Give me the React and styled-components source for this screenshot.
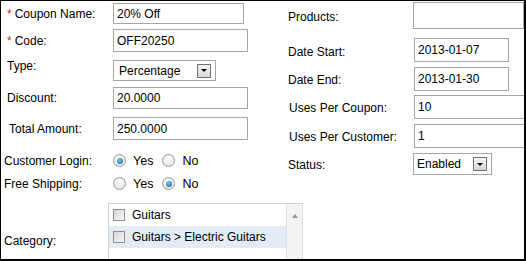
import { createGlobalStyle } from "styled-components";
import styled from "styled-components";

const Global = createGlobalStyle`
  html, body { margin: 0; padding: 0; background: #fff; }
  body { font-family: "Liberation Sans", Arial, sans-serif; font-size: 12px; color: #000; }
`;

const Frame = styled.div`
  width: 526px;
  height: 261px;
  box-sizing: border-box;
  border-style: solid;
  border-color: #000;
  border-width: 1px 2px 2px 1px;
  overflow: hidden;
  display: flex;
`;

const Column = styled.div`
  width: ${(p) => p.$w}px;
  padding-left: ${(p) => p.$pl}px;
  box-sizing: border-box;
  display: flex;
  flex-direction: column;
  flex-shrink: 0;
`;

const Row = styled.div`
  display: flex;
  align-items: center;
  margin-top: ${(p) => p.$mt}px;
  height: ${(p) => p.$h}px;
  flex-shrink: 0;
`;

// margin inside a centred flex row moves the label by half its value
const Label = styled.div`
  width: ${(p) => p.$w || 109}px;
  padding-left: ${(p) => p.$pl || 0}px;
  margin-top: ${(p) => p.$dy || 0}px;
  box-sizing: border-box;
  flex-shrink: 0;
  white-space: nowrap;
`;

const Star = styled.span`
  color: #e0241b;
  margin-right: 3px;
`;

const Input = styled.div`
  width: ${(p) => p.$w}px;
  height: 100%;
  box-sizing: border-box;
  border: 1px solid #a5a5a5;
  padding-left: ${(p) => p.$pl || 3}px;
  display: flex;
  align-items: center;
  flex-shrink: 0;
  white-space: nowrap;
`;

const Select = styled(Input)`
  justify-content: space-between;
  padding-right: 4px;
`;

const Arrow = styled.span`
  width: 14px;
  height: 14px;
  box-sizing: border-box;
  border: 1px solid #707070;
  background: linear-gradient(#f4f4f4, #d8d8d8);
  display: flex;
  align-items: center;
  justify-content: center;
  &::after {
    content: "";
    border-left: 3px solid transparent;
    border-right: 3px solid transparent;
    border-top: 3px solid #000;
  }
`;

const Options = styled.div`
  display: flex;
  align-items: center;
  padding-left: 0;
`;

const Radio = styled.span`
  width: 13px;
  height: 13px;
  box-sizing: border-box;
  border-radius: 50%;
  border: 1px solid #9a9a9a;
  background: radial-gradient(circle at 50% 35%, #ffffff, #dcdcdc);
  display: inline-flex;
  align-items: center;
  justify-content: center;
  margin-right: 7px;
  &::after {
    content: "";
    display: ${(p) => (p.$checked ? "block" : "none")};
    width: 6px;
    height: 6px;
    border-radius: 50%;
    background: radial-gradient(circle at 40% 35%, #7cc7f0, #0f5d93);
  }
`;

const OptText = styled.span`
  margin-right: 9px;
  font-size: 12.5px;
`;

const ListBox = styled.div`
  width: 195px;
  height: 76px;
  box-sizing: border-box;
  border: 1px solid #cfcfcf;
  border-right: none;
  display: flex;
  flex-shrink: 0;
  align-self: flex-start;
`;

const ListItems = styled.div`
  flex: 1;
`;

const Item = styled.div`
  height: 22px;
  display: flex;
  align-items: center;
  padding-left: 4px;
  background: ${(p) => (p.$hl ? "#e3ecf6" : "transparent")};
  white-space: nowrap;
  overflow: hidden;
`;

const Check = styled.span`
  width: 12px;
  height: 12px;
  box-sizing: border-box;
  border: 1px solid #8e8e8e;
  background: linear-gradient(135deg, #d6d6d6, #f7f7f7);
  margin-right: 7px;
  flex-shrink: 0;
`;

const Scroll = styled.div`
  width: 17px;
  background: #f3f3f3;
  border-left: 1px solid #e2e2e2;
  border-right: 1px solid #dedede;
  display: flex;
  flex-direction: column;
  align-items: center;
  justify-content: space-between;
  padding: 6px 0;
  box-sizing: border-box;
`;

const ScrollArrow = styled.span`
  border-left: 3px solid transparent;
  border-right: 3px solid transparent;
  ${(p) => (p.$down ? "border-top: 3px solid #b5b5b5;" : "border-bottom: 4px solid #9a9a9a;")}
  margin-top: ${(p) => (p.$down ? 0 : 4)}px;
`;

export default function App() {
  return (
    <>
      <Global />
      <Frame>
        <Column $w={282} $pl={3}>
          <Row $mt={2} $h={21}>
            <Label $pl={3}><Star>*</Star>Coupon Name:</Label>
            <Input $w={131}>20% Off</Input>
          </Row>
          <Row $mt={5} $h={23}>
            <Label $pl={3}><Star>*</Star>Code:</Label>
            <Input $w={135}>OFF20250</Input>
          </Row>
          <Row $mt={8} $h={21}>
            <Label $pl={3} $dy={-9}>Type:</Label>
            <Select $w={103} $pl={5}>
              Percentage
              <Arrow />
            </Select>
          </Row>
          <Row $mt={6} $h={22}>
            <Label $pl={3}>Discount:</Label>
            <Input $w={135}>20.0000</Input>
          </Row>
          <Row $mt={8} $h={23}>
            <Label $pl={5}>Total Amount:</Label>
            <Input $w={135}>250.0000</Input>
          </Row>
          <Row $mt={12} $h={17}>
            <Label>Customer Login:</Label>
            <Options>
              <Radio $checked />
              <OptText>Yes</OptText>
              <Radio />
              <OptText>No</OptText>
            </Options>
          </Row>
          <Row $mt={6} $h={17}>
            <Label>Free Shipping:</Label>
            <Options>
              <Radio />
              <OptText>Yes</OptText>
              <Radio $checked />
              <OptText>No</OptText>
            </Options>
          </Row>
          <Row $mt={11} $h={76}>
            <Label $w={104}>Category:</Label>
            <ListBox>
              <ListItems>
                <Item><Check />Guitars</Item>
                <Item $hl><Check />Guitars &gt; Electric Guitars</Item>
              </ListItems>
              <Scroll>
                <ScrollArrow />
                <ScrollArrow $down />
              </Scroll>
            </ListBox>
          </Row>
        </Column>
        <Column $w={241} $pl={5}>
          <Row $mt={1} $h={27}>
            <Label $w={125} $dy={3}>Products:</Label>
            <Input $w={111} />
          </Row>
          <Row $mt={9} $h={24}>
            <Label $w={126} $dy={3}>Date Start:</Label>
            <Input $w={95}>2013-01-07</Input>
          </Row>
          <Row $mt={5} $h={24}>
            <Label $w={126} $dy={2}>Date End:</Label>
            <Input $w={95}>2013-01-30</Input>
          </Row>
          <Row $mt={4} $h={24}>
            <Label $w={126} $pl={1} $dy={2}>Uses Per Coupon:</Label>
            <Input $w={120}>10</Input>
          </Row>
          <Row $mt={5} $h={24}>
            <Label $w={126} $pl={1} $dy={2}>Uses Per Customer:</Label>
            <Input $w={120}>1</Input>
          </Row>
          <Row $mt={5} $h={22}>
            <Label $w={125} $dy={2}>Status:</Label>
            <Select $w={79}>
              Enabled
              <Arrow />
            </Select>
          </Row>
        </Column>
      </Frame>
    </>
  );
}
